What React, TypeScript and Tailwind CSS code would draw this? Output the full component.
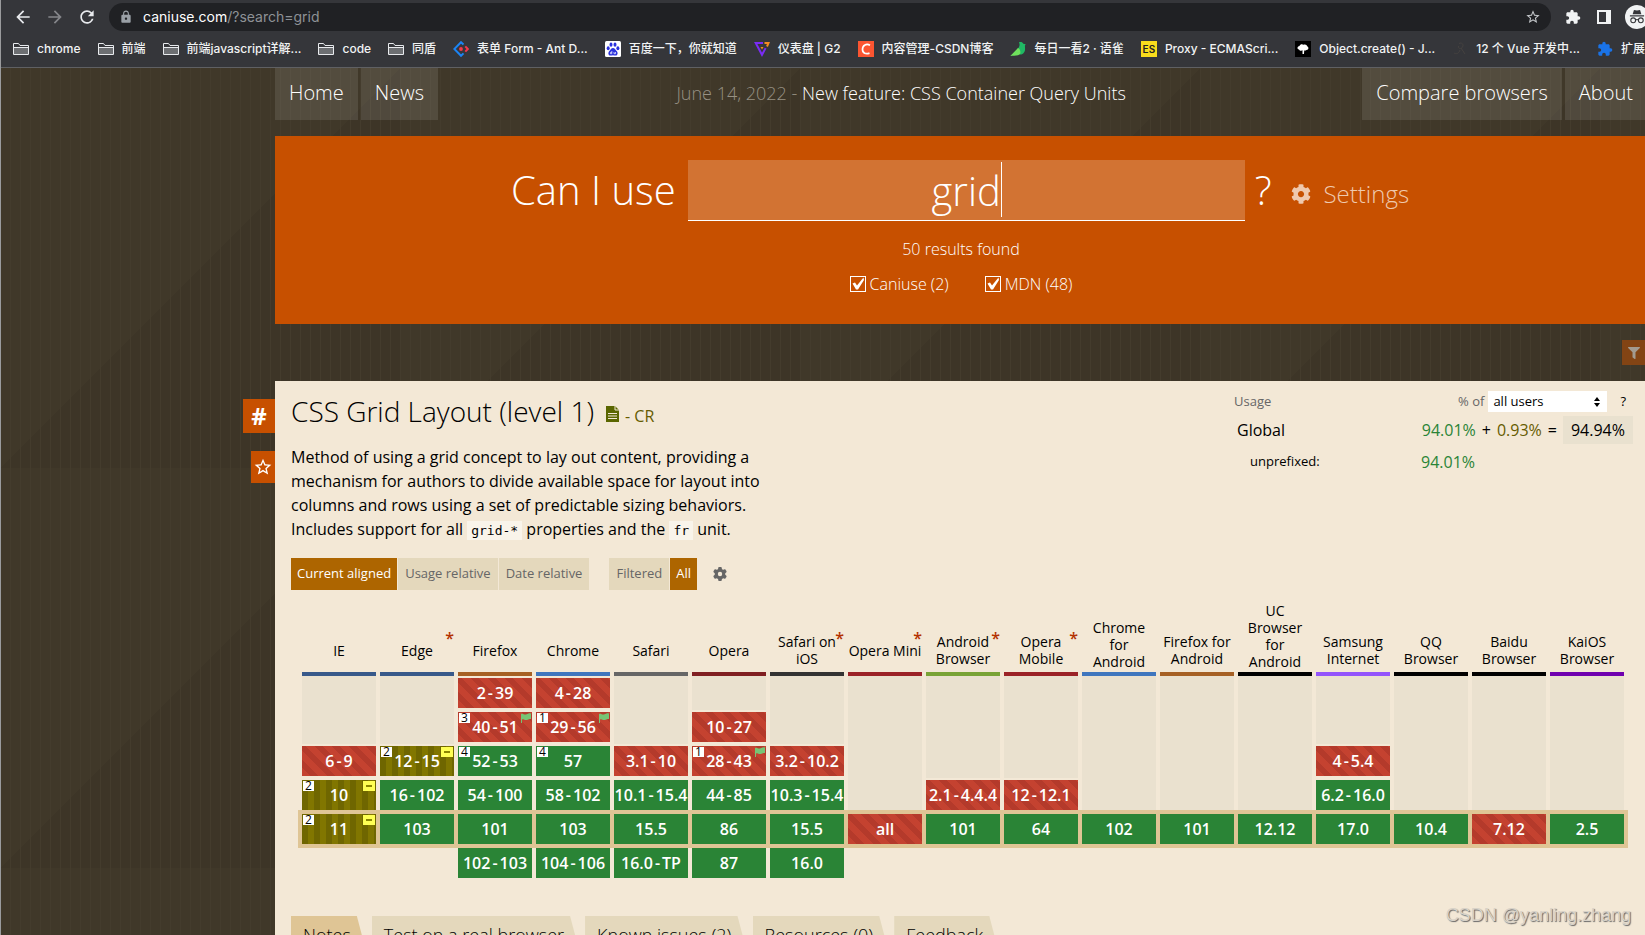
import type { ReactNode } from "react";
import { FaGear } from "react-icons/fa6";
import { FaCog, FaFilter } from "react-icons/fa";
import {
  MdArrowBack,
  MdArrowForward,
  MdExtension,
  MdLock,
  MdRefresh,
  MdStarBorder,
} from "react-icons/md";

type Support = "y" | "n" | "a";

type Cell = {
  v: string;
  s: Support;
  note?: string;
  flag?: boolean;
  prefix?: boolean;
};

type Browser = {
  name: string;
  bar: string;
  star?: boolean;
  cells: (Cell | null)[];
};

const y = (v: string, extra = {}): Cell => ({ v, s: "y", ...extra });
const n = (v: string, extra = {}): Cell => ({ v, s: "n", ...extra });
const a = (v: string, extra = {}): Cell => ({ v, s: "a", ...extra });

const partial = { note: "2", prefix: true };

const BROWSERS: Browser[] = [
  { name: "IE", bar: "border-[#38598a]", cells: [null, null, n("6-9"), a("10", partial), a("11", partial), null] },
  { name: "Edge", bar: "border-[#38598a]", star: true, cells: [null, null, a("12-15", partial), y("16-102"), y("103"), null] },
  { name: "Firefox", bar: "border-[#a66024]", cells: [n("2-39"), n("40-51", { note: "3", flag: true }), y("52-53", { note: "4" }), y("54-100"), y("101"), y("102-103")] },
  { name: "Chrome", bar: "border-[#3f76be]", cells: [n("4-28"), n("29-56", { note: "1", flag: true }), y("57", { note: "4" }), y("58-102"), y("103"), y("104-106")] },
  { name: "Safari", bar: "border-[#666666]", cells: [null, null, n("3.1-10"), y("10.1-15.4"), y("15.5"), y("16.0-TP")] },
  { name: "Opera", bar: "border-[#801f22]", cells: [null, n("10-27"), n("28-43", { note: "1", flag: true }), y("44-85"), y("86"), y("87")] },
  { name: "Safari on\niOS", bar: "border-[#333333]", star: true, cells: [null, null, n("3.2-10.2"), y("10.3-15.4"), y("15.5"), y("16.0")] },
  { name: "Opera Mini", bar: "border-[#9b2227]", star: true, cells: [null, null, null, null, n("all"), null] },
  { name: "Android\nBrowser", bar: "border-[#79a336]", star: true, cells: [null, null, null, n("2.1-4.4.4"), y("101"), null] },
  { name: "Opera\nMobile", bar: "border-[#9b2227]", star: true, cells: [null, null, null, n("12-12.1"), y("64"), null] },
  { name: "Chrome\nfor\nAndroid", bar: "border-[#3f76be]", cells: [null, null, null, null, y("102"), null] },
  { name: "Firefox for\nAndroid", bar: "border-[#a66024]", cells: [null, null, null, null, y("101"), null] },
  { name: "UC\nBrowser\nfor\nAndroid", bar: "border-black", cells: [null, null, null, null, y("12.12"), null] },
  { name: "Samsung\nInternet", bar: "border-[#9353fb]", cells: [null, null, n("4-5.4"), y("6.2-16.0"), y("17.0"), null] },
  { name: "QQ\nBrowser", bar: "border-black", cells: [null, null, null, null, y("10.4"), null] },
  { name: "Baidu\nBrowser", bar: "border-black", cells: [null, null, null, null, n("7.12"), null] },
  { name: "KaiOS\nBrowser", bar: "border-[#6f00af]", cells: [null, null, null, null, y("2.5"), null] },
];

const CURRENT_ROW = 4;

// vertical padding for each version row, the current one gets the thick frame
const ROW_PADDING = ["py-0.5", "py-0.5", "py-0.5", "pt-0.5", "py-1", "pb-0.5"];

const SUPPORT_BG: Record<Support, string> = {
  y: "bg-[#2a8436]",
  n: "bg-[#c44230] bg-[repeating-linear-gradient(45deg,transparent_0_6px,#b43a2b_6px_12px)]",
  a: "bg-[#817600] bg-[repeating-linear-gradient(90deg,#6f6600_0_6px,transparent_6px_12px)]",
};

const FolderIcon = () => (
  <svg viewBox="0 0 16 16" className="size-4" fill="none" stroke="#e8eaed">
    <path d="M.5 13.5v-11h5l1.5 2h8.500v9z" />
    <path d="M1 6.500h14" />
    <path d="M1 7h14v6H1z" fill="#6d6f72" stroke="none" />
  </svg>
);

const AntIcon = () => (
  <svg viewBox="0 0 16 16" className="size-4" fill="none" strokeWidth="2">
    <path d="M10.500 3.500 8 1.200 1.300 8 8 14.800l2.500-2.400" stroke="#1b84f5" />
    <path d="m12.300 5.400 2.500 2.600-2.500 2.600" stroke="#f5384b" />
    <circle cx="8" cy="8" r="1.900" fill="#f5384b" />
  </svg>
);

const BaiduIcon = () => (
  <svg viewBox="0 0 16 16" className="size-4">
    <rect width="16" height="16" rx="1.500" fill="#fff" />
    <g fill="#2a32dd">
      <ellipse cx="3.200" cy="7.200" rx="1.500" ry="2" />
      <ellipse cx="6" cy="3.700" rx="1.500" ry="2.100" />
      <ellipse cx="10" cy="3.700" rx="1.500" ry="2.100" />
      <ellipse cx="12.900" cy="7.200" rx="1.500" ry="2" />
      <path d="M8 7c1.700 0 2.400 1.800 3.600 2.900 1.400 1.200 1.600 4.400-1 4.600-1 .1-1.700-.3-2.600-.3s-1.600.4-2.600.3c-2.600-.2-2.400-3.400-1-4.600C5.600 8.800 6.300 7 8 7z" />
    </g>
    <path d="M6.800 10v2.700H5.500v-1.200h1.200M9 11v1.700h1.500V11" stroke="#fff" strokeWidth=".7" fill="none" />
  </svg>
);

const G2Icon = () => (
  <svg viewBox="0 0 16 16" className="size-4" fill="none" strokeWidth="2">
    <path d="M9 2H1.700L8 13.800l3.600-6.700" stroke="#7a2cf5" />
    <path d="M10.500 2h4L13 5.500" stroke="#f58a1f" />
    <path d="M6.500 6h3L8 8.600z" fill="#f58a1f" />
  </svg>
);

const CsdnIcon = () => (
  <svg viewBox="0 0 16 16" className="size-4" fill="none">
    <rect width="16" height="16" fill="#fc5531" />
    <path d="M12 4.200C8.500 2.300 4.500 4 4.500 8.300c0 4.200 3.500 5.200 7 3.800" stroke="#fff" strokeWidth="1.700" />
  </svg>
);

const YuqueIcon = () => (
  <svg viewBox="0 0 16 16" className="size-4">
    <path d="M9 1.200c2-.6 3.700 0 4.300 1.600l2.400.4c-1.600 1.600 0 3.800-.9 6.800-.6 2-2.200 3.300-4.300 3.800L7.200 8.200C9.400 6.200 10.300 3.800 9 1.200z" fill="#20b864" />
    <path d="M.3 15 8 7c2.300 1.400 3 4 2 6.300-3 2-6.500 1-9.700 1.700z" fill="#6fe05c" />
  </svg>
);

const EsIcon = () => (
  <span className="flex size-4 items-center justify-center bg-[#f9dc1c] text-[10px] leading-none font-semibold text-[#222]">
    ES
  </span>
);

const TreeIcon = () => (
  <svg viewBox="0 0 16 16" className="size-4">
    <rect width="16" height="16" fill="#000" />
    <path d="M4 8.500C1.500 8 2.500 5 4.500 5c.5-2 3-2 4-1.200C10.500 3 12 4 12 5.200c2 .6 2 3.600-.5 3.700-.8.800-1.700.8-2.300.5L9 13H7.500V9.300C6.500 10.200 4.500 9.800 4 8.500z" fill="#fff" />
  </svg>
);

const VueDevIcon = () => (
  <svg viewBox="0 0 16 16" className="size-4" fill="none" stroke="#454240">
    <path d="M7 2.500c3-1.500 5 1 3.500 3.500S6 8 6.500 5M9 7l4 6M2 12c2 1.500 5 .5 6-3" />
  </svg>
);

const BOOKMARKS: { label: string; icon: ReactNode }[] = [
  { label: "chrome", icon: <FolderIcon /> },
  { label: "前端", icon: <FolderIcon /> },
  { label: "前端javascript详解...", icon: <FolderIcon /> },
  { label: "code", icon: <FolderIcon /> },
  { label: "同盾", icon: <FolderIcon /> },
  { label: "表单 Form - Ant D...", icon: <AntIcon /> },
  { label: "百度一下，你就知道", icon: <BaiduIcon /> },
  { label: "仪表盘 | G2", icon: <G2Icon /> },
  { label: "内容管理-CSDN博客", icon: <CsdnIcon /> },
  { label: "每日一看2 · 语雀", icon: <YuqueIcon /> },
  { label: "Proxy - ECMAScri...", icon: <EsIcon /> },
  { label: "Object.create() - J...", icon: <TreeIcon /> },
  { label: "12 个 Vue 开发中...", icon: <VueDevIcon /> },
  { label: "扩展程序", icon: <MdExtension className="size-4 text-[#1a73e8]" /> },
];

const BrowserChrome = () => (
  <header className="shrink-0 overflow-hidden border-b border-[#5f6063] bg-[#35363a] font-['Inter','Noto_Sans_CJK_SC',sans-serif]">
    <div className="flex items-center pt-[3px] pl-3">
      <button aria-label="Back" className="mr-3 text-[#e8eaed]">
        <MdArrowBack className="size-5" />
      </button>
      <button aria-label="Forward" className="mr-3 text-[#85868a]">
        <MdArrowForward className="size-5" />
      </button>
      <button aria-label="Reload" className="mr-3 text-[#e8eaed]">
        <MdRefresh className="size-5" />
      </button>
      <div className="flex h-7 flex-1 items-center rounded-full bg-[#202124] px-2.5">
        <MdLock className="mr-2.5 size-3.5 text-[#9aa0a6]" />
        <p className="flex-1 text-sm leading-5 text-[#8e9196]">
          <span className="text-white">caniuse.com</span>/?search=grid
        </p>
        <button aria-label="Bookmark this page" className="text-[#c4c7ca]">
          <MdStarBorder className="size-4" />
        </button>
      </div>
      <button aria-label="Extensions" className="ml-3.5 text-[#f1f3f4]">
        <MdExtension className="size-4" />
      </button>
      <button aria-label="Side panel" className="ml-4">
        <svg viewBox="0 0 14 14" className="size-3.5">
          <path d="M0 0h14v14H0zM2 2v10h7V2z" fill="#f1f3f4" fillRule="evenodd" />
        </svg>
      </button>
      <button aria-label="Incognito" className="-mr-1 ml-3.5 shrink-0">
        <svg viewBox="0 0 22 22" className="size-6">
          <circle cx="11" cy="11" r="11" fill="#f1f3f4" />
          <path d="M7 8.500 8.200 4.500l2.800.5 2.800-.5L15 8.500zM4.500 9.500h13v1h-13z" fill="#35363a" />
          <g fill="none" stroke="#35363a">
            <circle cx="7.500" cy="14" r="2.200" />
            <circle cx="14.500" cy="14" r="2.200" />
            <path d="M9.700 13.700q1.300-.8 2.600 0" />
          </g>
        </svg>
      </button>
    </div>
    <nav className="flex h-9 items-center gap-[17px] pl-3 text-xs font-medium whitespace-nowrap text-[#f1f3f4]">
      {BOOKMARKS.map((b) => (
        <a key={b.label} href="#" className="flex shrink-0 items-center gap-2">
          {b.icon}
          <span>{b.label}</span>
        </a>
      ))}
    </nav>
  </header>
);

const NavLink = ({ children }: { children: ReactNode }) => (
  <a
    href="#"
    className="flex h-[52px] items-center bg-white/10 px-3.5 pb-0.5 text-xl font-light whitespace-nowrap text-white">
    {children}
  </a>
);

const TopNav = () => (
  <nav className="flex items-start">
    <div className="flex gap-[3px]">
      <NavLink>Home</NavLink>
      <NavLink>News</NavLink>
    </div>
    <p className="flex-1 pt-[11px] pl-0.5 text-center text-lg leading-7 font-light text-[#979184]">
      June 14, 2022 -{" "}
      <a href="#" className="text-white">
        New feature: CSS Container Query Units
      </a>
    </p>
    <div className="-mr-0.5 flex gap-[3px]">
      <NavLink>Compare browsers</NavLink>
      <NavLink>About</NavLink>
    </div>
  </nav>
);

const SourceToggle = ({ id, label }: { id: string; label: string }) => (
  <div className="flex items-center gap-1">
    <span className="relative size-4">
      <input
        id={id}
        type="checkbox"
        defaultChecked
        className="block size-4 appearance-none border border-white"
      />
      <svg viewBox="0 0 16 16" className="pointer-events-none absolute inset-0 size-4">
        <path d="M2.500 7.500 5 6.500l2 3L13.500 1.500 14 4 8 13.500H6z" fill="#fff" />
      </svg>
    </span>
    <label htmlFor={id} className="text-base leading-5 font-light">
      {label}
    </label>
  </div>
);

const SearchPanel = () => (
  <section className="mt-4 h-[188px] bg-[#c75000] pt-6 text-white">
    <div className="flex items-start justify-center">
      <label htmlFor="search" className="text-[40px] leading-[60px] font-light">
        Can I use
      </label>
      <div className="relative ml-3 w-[557px]">
        <input
          id="search"
          defaultValue="grid"
          className="block h-[61px] w-full border-b border-white bg-white/20 text-center text-[40px] font-light outline-none"
        />
        <span className="absolute top-0.5 left-[313px] h-[55px] w-px bg-white" />
      </div>
      <span className="ml-2.5 text-[40px] leading-[60px] font-light">?</span>
      <button className="mt-4 ml-5 flex items-center gap-3 text-2xl leading-9 font-light text-[#efc9ae]">
        <FaCog className="size-5" />
        Settings
      </button>
    </div>
    <p className="mt-4 pl-0.5 text-center text-base leading-6 font-light">50 results found</p>
    <div className="mt-[13px] flex justify-center gap-9 pl-0.5">
      <SourceToggle id="src-caniuse" label="Caniuse (2)" />
      <SourceToggle id="src-mdn" label="MDN (48)" />
    </div>
  </section>
);

const Code = ({ children }: { children: ReactNode }) => (
  <code className="bg-[#f9f4ea] px-1 py-0.5 font-['DejaVu_Sans_Mono',monospace] text-[13px]">{children}</code>
);

const UsageStats = () => (
  <div className="w-[411px] shrink-0 pt-2.5 pr-3">
    <div className="flex h-[21px] items-center text-[13px] text-[#666]">
      <span className="flex-1">Usage</span>
      <label htmlFor="usage-of" className="mr-1">
        % of
      </label>
      <div className="relative">
        <select
          id="usage-of"
          className="block h-[21px] w-[119px] appearance-none bg-white pl-[5px] text-[13px] text-black">
          <option>all users</option>
        </select>
        <svg viewBox="0 0 6 10" className="pointer-events-none absolute top-1.5 right-[7px] h-2.5 w-1.5">
          <path d="M0 4 3 0l3 4zM0 6l3 4 3-4z" fill="#000" />
        </svg>
      </div>
      <button className="mr-[7px] ml-[13px] text-black">?</button>
    </div>
    <div className="mt-1 flex h-7 items-center text-base">
      <span className="flex-1 pl-[3px]">Global</span>
      <span className="text-[#2a8436]">94.01%</span>
      <span className="mx-1.5">+</span>
      <span className="text-[#665c00]">0.93%</span>
      <span className="mx-1.5">=</span>
      <span className="h-7 bg-[#e9e1cf] px-2 leading-7">94.94%</span>
    </div>
    <div className="mt-1 flex h-7 items-center">
      <span className="flex-1 pl-4 text-[13px]">unprefixed:</span>
      <span className="w-[212px] text-base text-[#2a8436]">94.01%</span>
    </div>
  </div>
);

const ViewButton = ({ active, children }: { active?: boolean; children: ReactNode }) => (
  <button
    className={
      active
        ? "h-8 bg-[#ad6500] px-1.5 text-[13px] font-medium text-white"
        : "h-8 bg-[#e4d8bc] px-[7px] text-[13px] text-[#666]"
    }>
    {children}
  </button>
);

const VersionCell = ({ cell }: { cell: Cell }) => {
  const parts = cell.v.split("-");
  return (
    <div
      className={`relative flex h-[30px] items-center justify-center text-base font-semibold whitespace-nowrap text-white ${SUPPORT_BG[cell.s]}`}>
      <span>
        {parts[0]}
        {parts[1] && <span className="mx-0.5">-</span>}
        {parts[1]}
      </span>
      {cell.note && (
        <span className="absolute top-px left-px w-[11px] bg-white text-center text-xs leading-[10px] font-normal text-black">
          {cell.note}
        </span>
      )}
      {cell.flag && (
        <svg viewBox="0 0 10 10" className="absolute top-px right-px size-2.5">
          <path d="M0 1c2-1 3 1 5 .5S8 0 10 .5V6C8 5.500 7 7 5 7S3 5.500 1 6.500V10H0z" fill="#77c574" />
        </svg>
      )}
      {cell.prefix && (
        <span className="absolute top-px right-px flex h-2.5 w-3 items-center justify-center bg-[#ffff54]">
          <span className="h-0.5 w-1.5 bg-[#8b8500]" />
        </span>
      )}
    </div>
  );
};

const SupportTable = () => (
  <table className="mt-3 w-full table-fixed border-separate border-spacing-0">
    <colgroup>
      {BROWSERS.map((b, i) => (
        <col key={b.name} className={i === 0 || i === BROWSERS.length - 1 ? "w-20" : ""} />
      ))}
    </colgroup>
    <thead>
      <tr>
        {BROWSERS.map((b) => (
          <th
            key={b.name}
            scope="col"
            className="px-0.5 align-bottom text-sm leading-[17px] font-normal first:pl-1 last:pr-1">
            <div className={`relative border-b-4 pb-0.5 ${b.bar}`}>
              <div className="-mx-0.5 flex min-h-10 items-center justify-center whitespace-pre-line">{b.name}</div>
              {b.star && (
                <span className="absolute right-0 bottom-[22px] text-base font-semibold text-[#b33100]">*</span>
              )}
            </div>
          </th>
        ))}
      </tr>
    </thead>
    <tbody>
      {ROW_PADDING.map((padding, row) => (
        <tr key={row} className={row === CURRENT_ROW ? "bg-[#dfc595]" : ""}>
          {BROWSERS.map((b) => {
            const cell = b.cells[row];
            return (
              <td key={b.name} className="h-px px-0.5 py-0 first:pl-1 last:pr-1">
                {cell ? (
                  <div className={padding}>
                    <VersionCell cell={cell} />
                  </div>
                ) : (
                  row < CURRENT_ROW && <div className={row === 3 ? "h-8 bg-[#eae1cf]" : "h-[34px] bg-[#eae1cf]"} />
                )}
              </td>
            );
          })}
        </tr>
      ))}
    </tbody>
  </table>
);

const TABS = ["Notes", "Test on a real browser", "Known issues (2)", "Resources (0)", "Feedback"];

const FeatureCard = () => (
  <article className="relative mt-4 flex-1 bg-[#f3e8d6] text-black">
    <div className="absolute top-[18px] right-full flex flex-col items-end gap-[18px] text-white">
      <a href="#" className="flex h-[34px] w-8 items-center justify-center bg-[#c75000] text-2xl font-bold">
        #
      </a>
      <button aria-label="Favorite" className="flex h-8 w-6 items-center justify-center bg-[#c75000]">
        <MdStarBorder className="size-5" />
      </button>
    </div>

    <div className="flex justify-between pl-4">
      <div className="pt-[9px]">
        <h2 className="flex items-baseline text-[28px] leading-[42px] font-light">
          CSS Grid Layout (level 1)
          <a href="#" className="ml-3 flex items-baseline gap-1.5 text-base font-normal text-[#665c00]">
            <svg viewBox="0 0 13 16" className="h-4 w-[13px]">
              <path d="M0 0h9l4 4v12H0z" fill="#5a6600" />
              <path d="M9 0v4h4M2 7.500h9M2 10h9M2 12.500h9" stroke="#f3e8d6" fill="none" />
            </svg>
            - CR
          </a>
        </h2>
        <p className="mt-[13px] max-w-[480px] text-base leading-6">
          Method of using a grid concept to lay out content, providing a mechanism for authors to divide available space for
          layout into columns and rows using a set of predictable sizing behaviors. Includes support for all{" "}
          <Code>grid-*</Code> properties and the <Code>fr</Code> unit.
        </p>
      </div>
      <UsageStats />
    </div>

    <div className="mt-[15px] flex items-center pl-4">
      <div className="flex gap-px">
        <ViewButton active>Current aligned</ViewButton>
        <ViewButton>Usage relative</ViewButton>
        <ViewButton>Date relative</ViewButton>
      </div>
      <div className="ml-5 flex gap-px">
        <ViewButton>Filtered</ViewButton>
        <ViewButton active>All</ViewButton>
      </div>
      <button aria-label="Table settings" className="ml-4 text-[#666]">
        <FaGear className="size-3.5" />
      </button>
    </div>

    <div className="pr-[17px] pl-[23px]">
      <SupportTable />
    </div>

    <div className="mt-9 flex gap-[5px] pl-4">
      {TABS.map((tab, i) => (
        <button
          key={tab}
          className={`h-[38px] pr-4 pl-3 text-lg font-light whitespace-nowrap [clip-path:polygon(0_0,calc(100%-10px)_0,100%_100%,0_100%)] ${i === 0 ? "bg-[#dfc595]" : "bg-[#e4d8bc]"}`}>
          {tab}
        </button>
      ))}
    </div>
  </article>
);

const App = () => {
  return (
    <div className="relative flex h-screen flex-col overflow-hidden border-l border-[#9a9b9d] bg-[#3f3829]">
      <BrowserChrome />
      <main className="flex flex-1 flex-col bg-[image:repeating-linear-gradient(90deg,transparent_0_9px,#443c2d_9px_10px),linear-gradient(135deg,#403829_50%,#3d3527_50%)] bg-[length:auto,400px_400px] pl-[274px] font-['Open_Sans',sans-serif]">
        <TopNav />
        <SearchPanel />
        <div className="mt-4 flex justify-end">
          <button aria-label="Filter" className="flex h-[25px] w-[23px] items-center justify-center bg-[#834414] text-[#a39b90]">
            <FaFilter className="size-3" />
          </button>
        </div>
        <FeatureCard />
      </main>
      <p className="absolute right-3.5 bottom-1.5 font-['Liberation_Sans',sans-serif] text-lg text-[#d8d2c8] [text-shadow:1px_1px_1px_#666]">
        CSDN @yanling.zhang
      </p>
    </div>
  );
};

export default App;
